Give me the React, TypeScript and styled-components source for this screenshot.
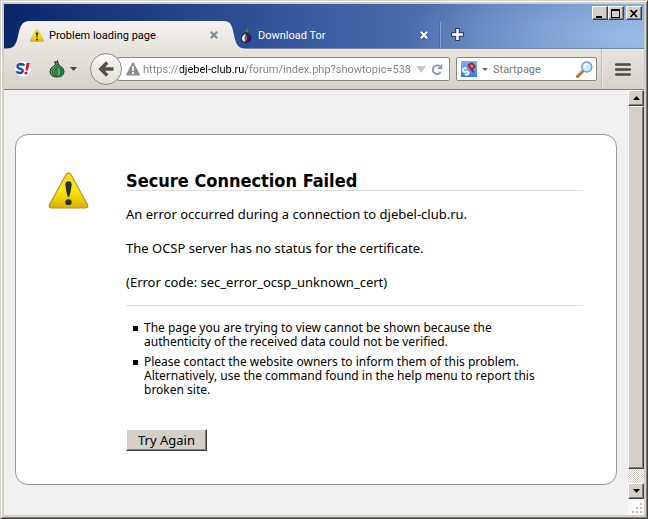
import React, { useState } from "react";
import styled, { createGlobalStyle, css } from "styled-components";

const GlobalStyle = createGlobalStyle`
  * { box-sizing: border-box; }
  html, body, #root { height: 100%; margin: 0; }
  body { font-family: "Noto Sans", Tahoma, sans-serif; font-size: 11px; color: #000; }
  button, input { font: inherit; margin: 0; }
  button { padding: 0; border: 0; background: none; color: inherit; }
  svg { display: block; flex: none; }
`;

const chromeFont = css`
  font-family: Roboto, Tahoma, sans-serif;
  font-size: 11px;
`;

const raised = css`
  background: #d4d0c8;
  border: 1px solid;
  border-color: #fff #404040 #404040 #fff;
  box-shadow: inset -1px -1px 0 #808080;
`;

const Window = styled.div`
  height: 100%;
  display: flex;
  flex-direction: column;
  padding: 1px;
  background: #d4d0c8;
  border: 1px solid;
  border-color: #d4d0c8 #404040 #404040 #d4d0c8;
  box-shadow: inset 1px 1px 0 #fff, inset -1px -1px 0 #808080;
`;

const Frame = styled.div`
  flex: 1;
  min-height: 0;
  margin: 2px;
  display: flex;
  flex-direction: column;
`;

const TitleBar = styled.header`
  position: relative;
  height: 45px;
  flex: none;
  display: flex;
  align-items: flex-end;
  background: radial-gradient(ellipse 240px 70px at 100% 75%, rgba(166, 202, 240, 0.75), rgba(166, 202, 240, 0)),
    linear-gradient(90deg, #0a246a, #36579d 45%, #7395cb);
  border-bottom: 1px solid #7a86a0;
`;

const Tab = styled.div<{ $active?: boolean }>`
  display: flex;
  align-items: center;
  height: 28px;
  padding-right: ${(p) => (p.$active ? "2px" : "7px")};
  margin-bottom: -1px;
  margin-left: ${(p) => (p.$active ? "0" : "-8px")};
  background: ${(p) => (p.$active ? "linear-gradient(#f3f2ef, #e7e4de)" : "none")};
  color: ${(p) => (p.$active ? "#000" : "#fff")};
`;

const TabLabel = styled.button<{ $width: number }>`
  ${chromeFont}
  display: flex;
  align-items: center;
  gap: 5px;
  width: ${(p) => p.$width}px;
  height: 28px;
  text-align: left;
  white-space: nowrap;
`;

const TabEdge = styled.svg`
  margin-bottom: -1px;
`;

const TabDivider = styled.span`
  width: 1px;
  height: 26px;
  background: #46699f;
  box-shadow: 1px 0 0 #87a5d4;
`;

const NewTab = styled.button`
  display: grid;
  place-items: center;
  width: 34px;
  height: 28px;
`;

const Caption = styled.div`
  position: absolute;
  top: 2px;
  right: 2px;
  display: flex;
`;

const CaptionButton = styled.button<{ $apart?: boolean }>`
  ${raised}
  display: grid;
  place-items: center;
  width: 16px;
  height: 14px;
  margin-left: ${(p) => (p.$apart ? "2px" : "0")};
`;

const Toolbar = styled.nav`
  height: 41px;
  flex: none;
  display: flex;
  align-items: center;
  padding-left: 10px;
  background: linear-gradient(#e7e4de, #d6d2ca);
  border-bottom: 1px solid #808080;
`;

const ToolButton = styled.button<{ $width: number }>`
  display: flex;
  align-items: center;
  gap: 5px;
  width: ${(p) => p.$width}px;
  height: 32px;
`;

const BackButton = styled.button`
  position: relative;
  display: grid;
  place-items: center;
  width: 32px;
  height: 32px;
  flex: none;
  border: 1px solid #8e8b85;
  border-radius: 50%;
  background: linear-gradient(#f8f7f5, #e3e0da);
`;

const Field = styled.div`
  display: flex;
  align-items: center;
  height: 24px;
  background: #fff;
  border: 1px solid #8b8882;
  border-radius: 2px;
`;

const UrlField = styled(Field)`
  flex: 1;
  min-width: 0;
  margin-left: -5px;
  margin-right: 6px;
  padding: 0 4px 0 8px;
`;

const SearchField = styled(Field)`
  width: 141px;
  padding: 0 3px 0 4px;
`;

const TextInput = styled.input`
  ${chromeFont}
  flex: 1;
  min-width: 0;
  height: 20px;
  padding: 0;
  border: 0;
  outline: 0;
  background: transparent;
  color: #777;
  &::placeholder { color: #777; opacity: 1; }
`;

const UrlInput = styled(TextInput)`
  margin: 0 2px 0 3px;
  color: transparent;
  caret-color: #000;
  background: linear-gradient(90deg, #808080 37px, #000 37px, #000 103px, #808080 103px);
  -webkit-background-clip: text;
  background-clip: text;
`;

const IconButton = styled.button`
  display: grid;
  place-items: center;
  flex: none;
  min-width: 16px;
  height: 20px;
`;

const MenuButton = styled.button`
  display: grid;
  place-items: center;
  width: 43px;
  height: 40px;
  margin-left: 4px;
  border-left: 1px solid #bcb8b0;
  box-shadow: inset 1px 0 0 #eeece8;
`;

const Viewport = styled.div`
  flex: 1;
  min-height: 0;
  display: flex;
`;

const Page = styled.main`
  flex: 1;
  min-width: 0;
  padding: 44px 11px 0;
  background: #f0f0f0;
  overflow: hidden;
`;

const Card = styled.section`
  display: flex;
  align-items: flex-start;
  padding: 37px 33px 33px 32px;
  background: #fff;
  border: 1px solid #979797;
  border-radius: 13px;
`;

const Message = styled.div`
  flex: 1;
  min-width: 0;
  margin-left: 37px;
`;

const Title = styled.h1`
  margin: 0 0 14px;
  padding-bottom: 1px;
  border-bottom: 1px solid #ddd;
  font-family: "DejaVu Sans Condensed", Tahoma, sans-serif;
  font-size: 18px;
  line-height: 17px;
`;

const Detail = styled.p`
  margin: 0 0 16px;
  font-size: 13px;
  line-height: 18px;
`;

const Advice = styled.ul`
  margin: -2px 0 0;
  padding: 15px 40px 0 18px;
  border-top: 1px solid #ddd;
  list-style: none;
`;

const AdviceItem = styled.li`
  display: block;
  margin-bottom: 6px;
  font-size: 12px;
  line-height: 14px;
  &::before {
    content: "";
    float: left;
    width: 5px;
    height: 5px;
    margin: 5px 0 0 -11px;
    background: #000;
  }
`;

const RetryButton = styled.button`
  ${raised}
  height: 22px;
  margin-top: 26px;
  padding: 0 11px;
  font-size: 13px;
  line-height: 18px;
`;

const ScrollBar = styled.div`
  width: 16px;
  flex: none;
  display: flex;
  flex-direction: column;
  background: repeating-conic-gradient(#fff 0 25%, #d4d0c8 0 50%) 0 0 / 2px 2px;
`;

const ScrollButton = styled.button`
  ${raised}
  display: grid;
  place-items: center;
  width: 16px;
  height: 16px;
`;

const ScrollThumb = styled.div`
  ${raised}
  flex: 1;
  margin-bottom: 14px;
`;

const Grip = styled.div`
  display: flex;
  align-items: flex-end;
  justify-content: flex-end;
  height: 16px;
  background: #fafafa;
`;

const WarningIcon = ({ width, height }: { width: number; height: number }) => (
  <svg width={width} height={height} viewBox="0 0 42 38" aria-hidden="true">
    <defs>
      <linearGradient id={`warn${width}`} x1="0" y1="0" x2="0" y2="1">
        <stop offset="0" stopColor="#f2dc28" />
        <stop offset="0.5" stopColor="#fbe70c" />
        <stop offset="1" stopColor="#dcb004" />
      </linearGradient>
    </defs>
    <path d="M18.6 2.3Q21 -.6 23.4 2.3L40.6 33.6Q41.6 36.8 38.4 37H3.6Q.4 36.8 1.4 33.6Z" fill={`url(#warn${width})`} stroke="#b5913c" strokeWidth="1.2" />
    <path d="M17.8 12.5Q18 9.6 21 9.6T24.2 12.5Q24 18.5 21.8 25.4H20.2Q18 18.5 17.8 12.5Z" fill="#2b2d33" />
    <ellipse cx="21" cy="31" rx="3.2" ry="3" fill="#2b2d33" />
  </svg>
);

const CloseIcon = ({ color, edge }: { color: string; edge: string }) => (
  <svg width="10" height="10" viewBox="0 0 10 10" aria-hidden="true">
    <path d="M1.8 1.8L8.2 8.2M8.2 1.8L1.8 8.2" stroke={edge} strokeWidth="3.4" />
    <path d="M1.8 1.8L8.2 8.2M8.2 1.8L1.8 8.2" stroke={color} strokeWidth="2.2" />
  </svg>
);

const OnionIcon = () => (
  <svg width="13" height="17" viewBox="0 0 14 17" aria-hidden="true">
    <path d="M5.6 6Q5.2 2.6 9.6.6Q8.4 3.4 7.6 6Z" fill="#4e8c2c" />
    <path d="M5.6 5Q7 6 9 6Q12 8 12 11Q11.600 16 6.200 16Q1 15.600 1 11.600Q1.200 8 5.600 5Z" fill="#3c1f4e" stroke="#1a1028" strokeWidth=".6" />
    <path d="M5.800 7Q2.200 9 2.200 12Q2.600 14.800 5.400 15Q3.800 11 5.800 7Z" fill="#f4eef8" stroke="#f4eef8" strokeWidth=".6" />
    <path d="M6.600 8Q5 11 6.400 14.800Q8.600 12 6.600 8Z" fill="#9b7bb0" />
  </svg>
);

const TorButtonIcon = () => (
  <svg width="16" height="18" viewBox="0 0 16 18" aria-hidden="true">
    <path d="M6.500 4L5.500 1.500L7.500 2.500L8.500 .5L9.300 4Q9.500 5 11.500 6.200Q15 8.200 15 11.500Q14.600 17 8 17T1 11.500Q1 8.200 4.500 6.200Q6.500 5 6.500 4Z" fill="#48b46a" stroke="#1f2a22" strokeWidth="1" />
    <path d="M8 3Q8 6 10.500 8Q13 11 11 15.500Q14 14 14 11.500Q13.600 8.500 10.500 6.800Q8.500 5.500 8 3Z" fill="#207a3e" />
    <path d="M8 4V16.500M7 6.500Q3.200 9 3.400 12T6.500 16M7.500 8Q5.400 10.500 5.800 12.800T7.500 16M9 6.500Q12.600 9 12.400 12T9.500 16" fill="none" stroke="#25402d" strokeWidth=".9" />
  </svg>
);

const StopScriptIcon = () => (
  <svg width="18" height="18" viewBox="0 0 18 18" aria-hidden="true">
    <circle cx="9" cy="9" r="8.300" fill="#fff" stroke="#d5d9e2" />
    <path d="M10.300 5.600Q9.300 4 6.800 4Q3.400 4.100 3.500 6.500Q3.600 8.300 6.400 8.900Q8.900 9.400 8.700 11Q8.300 13 5.700 13Q3.300 12.900 2.600 11.300" fill="none" stroke="#1d4f9e" strokeWidth="2.500" />
    <path d="M12.600 3H15.800L13.800 10.400H11.500Z" fill="#e01020" />
    <circle cx="12" cy="13" r="1.600" fill="#e01020" />
  </svg>
);

const Triangle = ({ width = 7, height = 4, up = false, color = "#000" }) => (
  <svg width={width} height={height} viewBox="0 0 8 4" preserveAspectRatio="none" aria-hidden="true">
    <path d={up ? "M0 4L4 0L8 4Z" : "M0 0H8L4 4Z"} fill={color} />
  </svg>
);

const SiteWarning = () => (
  <svg width="14" height="14" viewBox="0 0 14 14" aria-hidden="true">
    <path d="M6 1.200Q7 -.4 8 1.200L13.600 12Q14 13.500 12.800 13.600H1.200Q0 13.500.4 12Z" fill="#8e8e8e" />
    <path d="M5.900 4.300H8.100L7.700 9H6.300ZM6 10.200H8V12H6Z" fill="#fff" />
  </svg>
);

const ReloadIcon = () => (
  <svg width="12" height="13" viewBox="0 0 12 13" aria-hidden="true">
    <path d="M8.800 3.300A4.300 4.300 0 1 0 9.600 9.200" fill="none" stroke="#8e9cb2" strokeWidth="2" />
    <path d="M11.200 .6V6H5.800Z" fill="#8e9cb2" />
  </svg>
);

const StartpageIcon = () => (
  <svg width="16" height="16" viewBox="0 0 16 16" aria-hidden="true">
    <defs>
      <linearGradient id="startpage" x1="0" y1="0" x2="0" y2="1">
        <stop offset="0" stopColor="#75b8ff" />
        <stop offset="1" stopColor="#2f7de8" />
      </linearGradient>
    </defs>
    <rect width="16" height="16" fill="url(#startpage)" />
    <path d="M5.600 7.400Q2 6.600 2 9T4.800 10.600Q7.400 10 7.600 11.800Q7.400 14.200 3.800 13.400" fill="none" stroke="#fff" strokeWidth="2" />
    <path d="M12.800 11.500L7.600 4.600Q9 1.600 11.800 3Q14.600 4.800 12.600 7Q11.600 8 10.200 7.800" fill="none" stroke="#c4161c" strokeWidth="2" />
  </svg>
);

const MagnifierIcon = () => (
  <svg width="17" height="17" viewBox="0 0 17 17" aria-hidden="true">
    <path d="M1.600 15.400L7 10" stroke="#c0651c" strokeWidth="3" strokeLinecap="round" />
    <path d="M1.800 14.600L6.400 10" stroke="#f0a050" strokeWidth="1" />
    <circle cx="10.800" cy="6" r="5" fill="#c8ecfc" stroke="#6f9fd0" strokeWidth="1.500" />
    <path d="M8 5.500Q8.600 3 11 2.900" fill="none" stroke="#fff" strokeWidth="1.600" />
  </svg>
);

export default function App() {
  const [url, setUrl] = useState("https://djebel-club.ru/forum/index.php?showtopic=538");
  return (
    <>
      <GlobalStyle />
      <Window>
        <Frame>
          <TitleBar>
            <TabEdge width="26" height="28" viewBox="0 0 26 28" aria-hidden="true">
              <defs>
                <linearGradient id="tab" x1="0" y1="0" x2="0" y2="1">
                  <stop offset="0" stopColor="#f3f2ef" />
                  <stop offset="1" stopColor="#e7e4de" />
                </linearGradient>
              </defs>
              <path d="M0 28C10 28 12 24 14 15C16 5 18 0 26 0V28Z" fill="url(#tab)" />
            </TabEdge>
            <Tab $active>
              <TabLabel $width={176}>
                <WarningIcon width={14} height={13} />
                Problem loading page
              </TabLabel>
              <IconButton aria-label="Close tab"><CloseIcon color="#858d96" edge="#e4e6e8" /></IconButton>
            </Tab>
            <TabEdge width="24" height="28" viewBox="0 0 24 28" aria-hidden="true">
              <path d="M0 0C7 0 8 5 10 14C12 24 14 28 24 28H0Z" fill="url(#tab)" />
            </TabEdge>
            <Tab>
              <TabLabel $width={176}>
                <OnionIcon />
                Download Tor
              </TabLabel>
              <IconButton aria-label="Close tab"><CloseIcon color="#fff" edge="#2f4a80" /></IconButton>
            </Tab>
            <TabDivider />
            <NewTab aria-label="New tab">
              <svg width="13" height="13" viewBox="0 0 13 13" aria-hidden="true">
                <path d="M6.500 0V13M0 6.500H13" stroke="#24375f" strokeWidth="4.600" />
                <path d="M6.500 1V12M1 6.500H12" stroke="#fff" strokeWidth="2.600" />
              </svg>
            </NewTab>
            <Caption>
              <CaptionButton aria-label="Minimize">
                <svg width="10" height="9" viewBox="0 0 10 9"><path d="M1 7H7V9H1Z" /></svg>
              </CaptionButton>
              <CaptionButton aria-label="Maximize">
                <svg width="10" height="9" viewBox="0 0 10 9"><path d="M0 0H9V9H0ZM1 2V8H8V2Z" fillRule="evenodd" /></svg>
              </CaptionButton>
              <CaptionButton aria-label="Close" $apart>
                <svg width="10" height="9" viewBox="0 0 10 9"><path d="M1.500 1L8 8M8 1L1.500 8" stroke="#000" strokeWidth="1.700" /></svg>
              </CaptionButton>
            </Caption>
          </TitleBar>
          <Toolbar>
            <ToolButton $width={35} aria-label="Script blocker"><StopScriptIcon /></ToolButton>
            <ToolButton $width={41} aria-label="Tor menu">
              <TorButtonIcon />
              <Triangle color="#3b4856" />
            </ToolButton>
            <BackButton aria-label="Back">
              <svg width="16" height="16" viewBox="0 0 16 16" aria-hidden="true">
                <path d="M9.200 1.500L2.700 8L9.200 14.500M3 8H15.500" fill="none" stroke="#555148" strokeWidth="3.400" />
              </svg>
            </BackButton>
            <UrlField>
              <SiteWarning />
              <UrlInput aria-label="Address" value={url} onChange={(e) => setUrl(e.target.value)} />
              <IconButton aria-label="Show history"><Triangle width={10} height={7} color="#c3c7d0" /></IconButton>
              <IconButton aria-label="Reload"><ReloadIcon /></IconButton>
            </UrlField>
            <SearchField>
              <IconButton aria-label="Choose search engine"><StartpageIcon /></IconButton>
              <IconButton aria-hidden="true" tabIndex={-1}><Triangle width={6} height={3} color="#666" /></IconButton>
              <TextInput aria-label="Search" placeholder="Startpage" />
              <IconButton aria-label="Search"><MagnifierIcon /></IconButton>
            </SearchField>
            <MenuButton aria-label="Menu">
              <svg width="16" height="13" viewBox="0 0 16 13" aria-hidden="true">
                <path d="M1.200 1.500H14.800M1.200 6.500H14.800M1.200 11.500H14.800" stroke="#4c493f" strokeWidth="2.600" strokeLinecap="round" />
              </svg>
            </MenuButton>
          </Toolbar>
          <Viewport>
            <Page>
              <Card>
                <WarningIcon width={41} height={37} />
                <Message>
                  <Title>Secure Connection Failed</Title>
                  <Detail>An error occurred during a connection to djebel-club.ru.</Detail>
                  <Detail>The OCSP server has no status for the certificate.</Detail>
                  <Detail>(Error code: sec_error_ocsp_unknown_cert)</Detail>
                  <Advice>
                    <AdviceItem>The page you are trying to view cannot be shown because the authenticity of the received data could not be verified.</AdviceItem>
                    <AdviceItem>Please contact the website owners to inform them of this problem. Alternatively, use the command found in the help menu to report this broken site.</AdviceItem>
                  </Advice>
                  <RetryButton>Try Again</RetryButton>
                </Message>
              </Card>
            </Page>
            <ScrollBar>
              <ScrollButton aria-label="Scroll up"><Triangle up /></ScrollButton>
              <ScrollThumb />
              <ScrollButton aria-label="Scroll down"><Triangle /></ScrollButton>
              <Grip>
                <svg width="13" height="13" viewBox="0 0 13 13" aria-hidden="true">
                  <path d="M9 1h2v2h-2zM9 5h2v2h-2zM5 5h2v2h-2zM9 9h2v2h-2zM5 9h2v2h-2zM1 9h2v2h-2z" fill="#c2beb6" />
                </svg>
              </Grip>
            </ScrollBar>
          </Viewport>
        </Frame>
      </Window>
    </>
  );
}
